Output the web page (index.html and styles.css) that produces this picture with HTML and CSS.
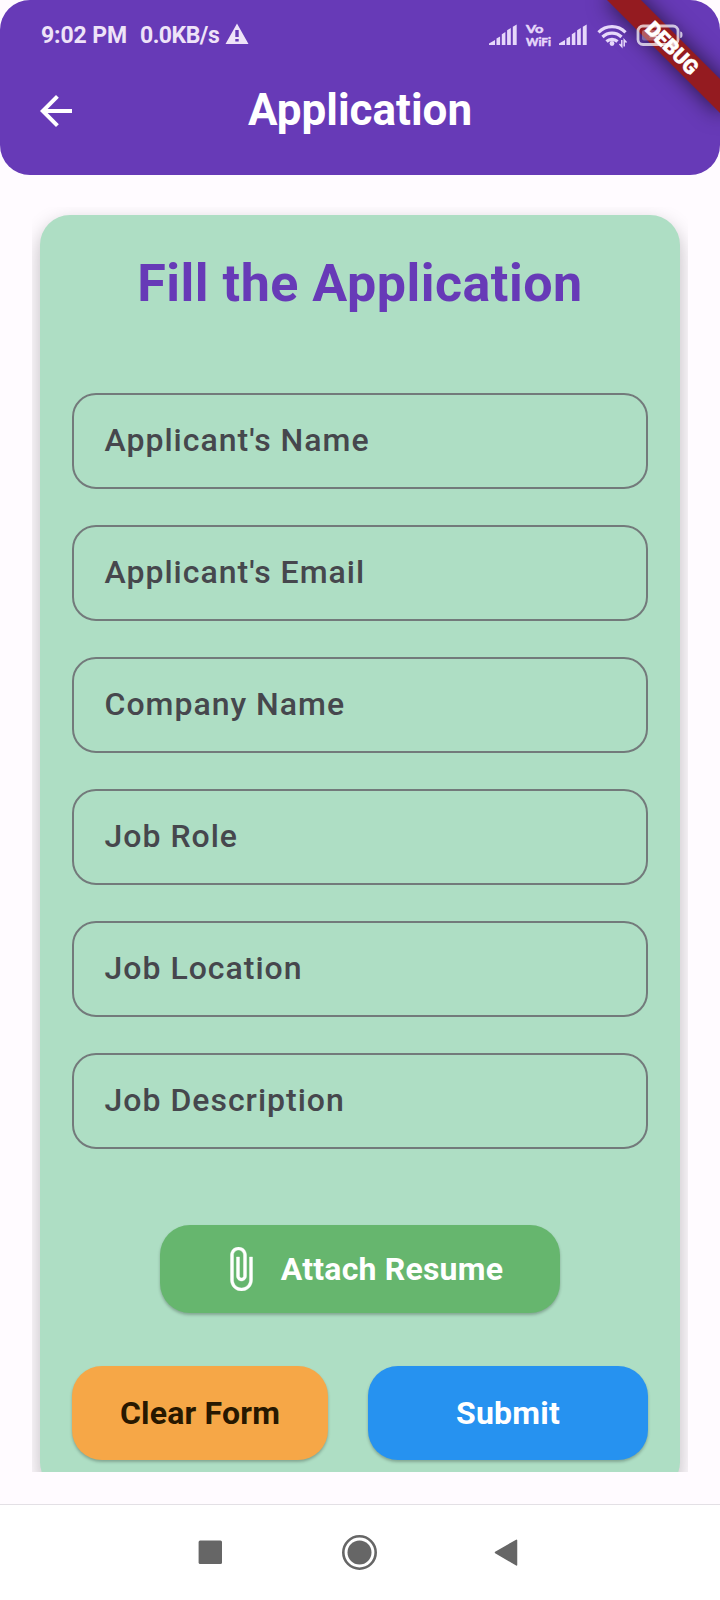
FILE: index.html
```html
<!DOCTYPE html>
<html lang="en">
<head>
<meta charset="utf-8">
<title>Application</title>
<link rel="stylesheet" href="styles.css">
</head>
<body>
<div class="screen">
  <header class="header">
    <div class="status">
      <span class="clock">9:02 PM</span>
      <span class="speed">0.0KB/s</span>
      <svg class="warn" width="24" height="22" viewBox="0 0 24 22"><path fill="#eee3f8" fill-rule="evenodd" d="M12 .5 23.500 21H.5zM10.300 7v7h3.400V7zm0 9v2.600h3.400V16z"/></svg>
      <svg class="signals" width="196" height="26" viewBox="0 0 196 26">
        <g fill="#e6d8fa">
          <path id="bars" d="M0 22v-1.500L6 17v5zM7.500 15.500l3.600-2V22H7.500zM12.800 11.200l3.600-2.200v13h-3.600zM18.100 7.200l3.700-2.200v17h-3.700zM23.800 3.700 27.700 1.500V22h-3.900z"/>
          <use href="#bars" x="70"/>
        </g>
        <g fill="#e6d8fa" class="vowifi"><text x="37" y="10.300" textLength="17.500" lengthAdjust="spacingAndGlyphs">Vo</text><text x="37" y="22.500" textLength="25" lengthAdjust="spacingAndGlyphs">WiFi</text></g>
        <g fill="none" stroke="#e6d8fa" stroke-width="3.200"><path d="M109.500 9.300a19 19 0 0 1 27 0M113.500 14a13.500 13.500 0 0 1 19 0M117.500 18.500a8 8 0 0 1 11 0"/></g>
        <circle fill="#e6d8fa" cx="123" cy="20.500" r="2.400"/>
        <path stroke="#e6d8fa" stroke-width="1.500" fill="none" d="M132.800 17v6.500l-2.300-2.500M135.200 23.500V17l2.300 2.500"/>
        <g opacity=".72">
          <rect x="149" y="3" width="40" height="18.500" rx="5" fill="none" stroke="#fff" stroke-width="2.800"/>
          <path d="M191.200 8.500q2.300 0 2.300 3.300t-2.300 3.300z" fill="#fff"/>
          <rect x="153" y="7" width="15" height="10.500" rx="2" fill="#fff" opacity=".4"/>
          <path d="m171 5.500-9 8h6l-2 6 9-8.500h-6z" fill="none" stroke="#fff" stroke-width="1.500"/>
        </g>
      </svg>
    </div>
    <div class="appbar">
      <svg class="back" width="32" height="32" viewBox="0 0 16 16"><path fill="#fff" d="M16 7H3.830l5.590-5.590L8 0 0 8l8 8 1.410-1.410L3.830 9H16z"/></svg>
      <h1 class="title">Application</h1>
    </div>
    <div class="ribbon">DEBUG</div>
  </header>
  <main class="viewport">
    <form class="card">
      <h2 class="heading">Fill the Application</h2>
      <div class="fields">
        <div class="field">Applicant's Name</div>
        <div class="field">Applicant's Email</div>
        <div class="field">Company Name</div>
        <div class="field">Job Role</div>
        <div class="field">Job Location</div>
        <div class="field">Job Description</div>
      </div>
      <div class="btn attach">
        <svg width="23" height="44" viewBox="6.750 1 11.500 22"><path fill="#fff" stroke="#fff" stroke-width=".2" d="M16.500 6v11.500c0 2.210-1.790 4-4 4s-4-1.790-4-4V5c0-1.380 1.120-2.500 2.500-2.500s2.500 1.120 2.500 2.500v10.500c0 .55-.45 1-1 1s-1-.45-1-1V6H10v9.500c0 1.380 1.120 2.500 2.500 2.500s2.500-1.120 2.500-2.500V5c0-2.210-1.790-4-4-4S7 2.790 7 5v12.500c0 3.040 2.460 5.500 5.500 5.500s5.500-2.460 5.500-5.500V6z"/></svg>
        <span>Attach Resume</span>
      </div>
      <div class="actions">
        <div class="btn clear">Clear Form</div>
        <div class="btn submit">Submit</div>
      </div>
    </form>
  </main>
  <nav class="nav">
    <svg width="720" height="95" viewBox="0 1505 720 95" fill="#666">
      <rect x="198.600" y="1540.600" width="23.400" height="23.400" rx="1.500"/>
      <circle cx="359.500" cy="1552.500" r="12"/>
      <circle cx="359.500" cy="1552.500" r="16.200" fill="none" stroke="#666" stroke-width="2.600"/>
      <path d="M495.500 1552.500 516.500 1540.300v24.600z" stroke="#666" stroke-width="1.500" stroke-linejoin="round"/>
    </svg>
  </nav>
</div>
</body>
</html>
```
FILE: styles.css
```css
* { box-sizing: border-box; }
body { margin: 0; background: #fffbff; font-family: Roboto, "Liberation Sans", sans-serif; }
.screen { width: 720px; height: 1600px; display: flex; flex-direction: column; overflow: hidden; }
.header { position: relative; height: 175px; flex: none; background: #673ab7; border-radius: 30px; overflow: hidden; }
.status { position: relative; z-index: 1; display: flex; align-items: center; height: 70px; padding: 2px 0 0 41px; color: #eee3f8; font-size: 23px; font-weight: 700; line-height: 27px; }
.clock { width: 99px; flex: none; margin-bottom: 2px; white-space: nowrap; letter-spacing: -.1px; }
.speed { width: 84px; flex: none; margin-bottom: 2px; white-space: nowrap; letter-spacing: -.5px; }
.warn { flex: none; margin-left: 1px; margin-top: -4px; }
.signals { flex: none; margin-left: 240px; overflow: visible; }
.vowifi { font: 700 11.5px Lato, sans-serif; stroke: #e6d8fa; stroke-width: .5px; }
.appbar { display: flex; align-items: center; height: 80px; padding: 0 40px; }
.back { flex: none; margin-top: 2px; }
.title { flex: 1; margin: 0 32px 0 0; color: #fff; font-size: 44px; font-weight: 700; line-height: 52px; text-align: center; }
.ribbon { position: absolute; left: 592px; top: 36px; width: 160px; height: 24px; transform: rotate(45deg); background: #941b20; box-shadow: 0 0 22px rgba(0, 0, 0, .65); color: #fff; font-size: 20.4px; font-weight: 900; line-height: 24px; text-align: center; -webkit-text-stroke: .5px #fff; }
.viewport { height: 1265px; margin: 32px 32px 32px; padding: 8px 8px 0; overflow: hidden; flex: none; }
.card { height: 1277px; padding: 39px 32px 0; border-radius: 30px; background: #aedec4; box-shadow: 0 8px 20px rgba(0, 0, 0, .26); }
.heading { margin: 0; height: 60px; line-height: 60px; font-size: 52px; font-weight: 700; letter-spacing: .5px; color: #673ab7; text-align: center; white-space: nowrap; }
.fields { display: grid; gap: 36px; margin-top: 79px; }
.field { height: 96px; border: 2px solid #737a7b; border-radius: 24px; padding: 0 30.5px; line-height: 90px; font-size: 32px; font-weight: 500; letter-spacing: 1px; color: #46474d; }
.btn { display: flex; align-items: center; justify-content: center; border-radius: 30px; font-size: 32px; font-weight: 700; letter-spacing: .2px; color: #fff; box-shadow: 0 2px 3px rgba(0, 0, 0, .25); white-space: nowrap; }
.attach { width: 400px; height: 88px; margin: 76px auto 53px; padding-left: 13px; gap: 28px; background: #66b66e; }
.actions { display: grid; grid-template-columns: 256px 280px; gap: 40px; }
.actions .btn { height: 94px; }
.clear { background: #f6a747; color: #281800; }
.submit { background: #2692f0; }
.nav { height: 96px; flex: none; border-top: 1px solid #e3e0e5; background: #fff; }
.nav svg { display: block; }
```
